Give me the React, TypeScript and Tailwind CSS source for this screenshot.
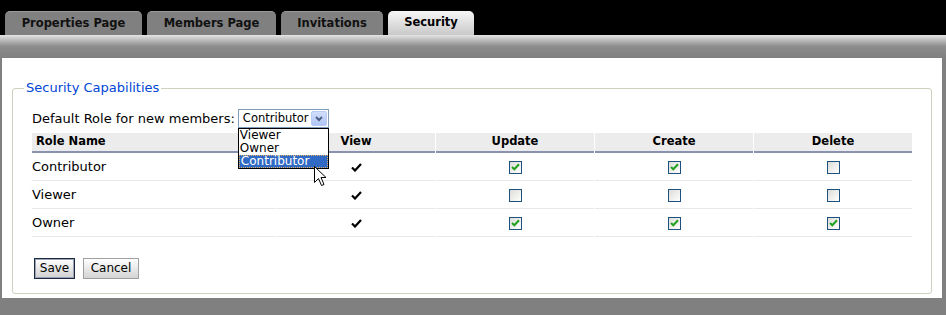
import React from "react";

const font = { fontFamily: '"DejaVu Sans", Verdana, sans-serif' };

function GreenCheck() {
  return (
    <svg width="9" height="8" viewBox="0 0 9 8" className="block">
      <path d="M1 4 L3.3 6.3 L8 1.2" fill="none" stroke="#21a121" strokeWidth="2" />
    </svg>
  );
}

function Box({ checked }: { checked: boolean }) {
  return (
    <div className="w-[13px] h-[13px] border border-[#1c5180] bg-gradient-to-br from-[#dcdcd7] to-white flex items-center justify-center">
      {checked && <GreenCheck />}
    </div>
  );
}

function ViewCheck() {
  return (
    <svg width="11" height="9" viewBox="0 0 11 9" className="block">
      <path d="M1 4.5 L4 7.5 L10 1" fill="none" stroke="#000" strokeWidth="2.2" />
    </svg>
  );
}

function Tab({ label, w, active }: { label: string; w: string; active?: boolean }) {
  return (
    <div
      className={
        "h-[24px] rounded-t-[5px] flex items-center justify-center font-bold text-[11.5px] " +
        w +
        (active
          ? " bg-gradient-to-b from-[#f6f6f6] to-[#c9c9c9] text-black"
          : " bg-[#808080] border-t border-[#9a9a9a] text-[#111]")
      }
    >
      {label}
    </div>
  );
}

const rows = [
  { name: "Contributor", u: true, c: true, d: false },
  { name: "Viewer", u: false, c: false, d: false },
  { name: "Owner", u: true, c: true, d: true },
];

const cell = "h-[28px] pt-[2px] border-b border-[#e8e8e8] flex items-center";

export default function App() {
  return (
    <div className="w-[946px] h-[315px] bg-black flex flex-col overflow-hidden" style={font}>
      <div className="h-[35px] flex items-end pl-[5px] gap-[5px]">
        <Tab label="Properties Page" w="w-[137px]" />
        <Tab label="Members Page" w="w-[129px]" />
        <Tab label="Invitations" w="w-[102px]" />
        <Tab label="Security" w="w-[86px]" active />
      </div>
      <div className="h-[23px] bg-gradient-to-b from-[#e4e4e4] via-[#8c8c8c] to-[#808080]" />
      <div className="flex-1 bg-[#808080] pl-[2px] pr-[4px]">
        <div className="h-[240px] bg-white pt-[22px] px-[10px]">
          <fieldset className="border border-[#d0d0bf] rounded-[3px] pl-[19px] pr-[18px] pb-[15px] h-[214px]">
            <legend className="ml-[-8px] px-[2px] text-[13px] leading-[16px] text-[#0046d5]">
              Security Capabilities
            </legend>
            <div className="flex items-center gap-[3px] mt-[13px] text-[13px] text-black">
              <span>Default Role for new members:</span>
              <div className="relative w-[91px] h-[19px] border border-[#7f9db9] bg-white flex items-center">
                <span className="pl-[4px] flex-1 leading-[17px] text-[11.5px]">Contributor</span>
                <div className="w-[16px] h-[15px] mr-[1px] rounded-[2px] bg-gradient-to-b from-[#d2defb] to-[#b0c6f5] border border-[#b8cbf3] flex items-center justify-center">
                  <svg width="8" height="6" viewBox="0 0 8 6">
                    <path d="M1 1 L4 4 L7 1" fill="none" stroke="#4d6185" strokeWidth="2" />
                  </svg>
                </div>
                <div className="absolute left-[-1px] top-[18px] w-[91px] h-[41px] border border-black bg-white z-10 text-[12px] leading-[13px]">
                  <div className="h-[13px] pl-[1px]">Viewer</div>
                  <div className="h-[13px] pl-[1px]">Owner</div>
                  <div className="h-[13px] pl-[1px] bg-[#316ac5] text-white border border-dotted border-[#e8b060] leading-[11px]">
                    Contributor
                  </div>
                </div>
                <svg className="absolute left-[75px] top-[56px] z-20" width="13" height="21" viewBox="0 0 13 21">
                  <path
                    d="M0.5 0.5 L0.5 16.5 L4.5 12.5 L7.5 19.5 L10 18.5 L7 11.5 L12 11.5 Z"
                    fill="#fff"
                    stroke="#000"
                    strokeWidth="1"
                  />
                </svg>
              </div>
            </div>
            <div className="grid grid-cols-[244px_158px_158px_158px_158px] gap-x-[1px] mt-[4px] text-[13px] text-black">
              <div className="h-[20px] bg-[#ececec] border-b-2 border-[#8992b0] pl-[4px] flex items-center font-bold text-[11.5px]">Role Name</div>
              {["View", "Update", "Create", "Delete"].map((h) => (
                <div key={h} className="h-[20px] bg-[#ececec] border-b-2 border-[#8992b0] flex items-center justify-center font-bold text-[11.5px]">
                  {h}
                </div>
              ))}
              {rows.map((r) => (
                <React.Fragment key={r.name}>
                  <div className={cell}>{r.name}</div>
                  <div className={cell + " justify-center"}>
                    <ViewCheck />
                  </div>
                  <div className={cell + " justify-center"}>
                    <Box checked={r.u} />
                  </div>
                  <div className={cell + " justify-center"}>
                    <Box checked={r.c} />
                  </div>
                  <div className={cell + " justify-center"}>
                    <Box checked={r.d} />
                  </div>
                </React.Fragment>
              ))}
            </div>
            <div className="flex gap-[8px] mt-[21px] ml-[2px] text-[12px]">
              <button className="w-[41px] h-[21px] border border-[#1c2a40] bg-gradient-to-b from-white to-[#d0d0d0] shadow-[inset_0_0_0_1px_#9aa4b8]">
                Save
              </button>
              <button className="w-[56px] h-[21px] border border-[#a0a0a0] bg-gradient-to-b from-white to-[#d4d4d4]">
                Cancel
              </button>
            </div>
          </fieldset>
        </div>
      </div>
    </div>
  );
}
